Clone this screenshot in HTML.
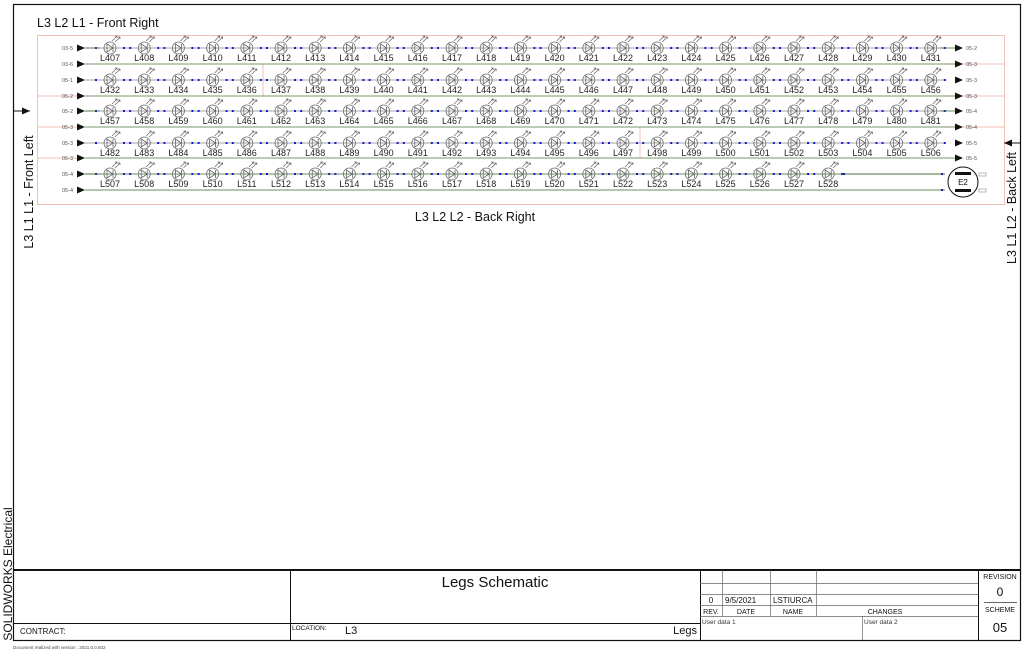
<!DOCTYPE html>
<html><head><meta charset="utf-8"><style>
body{margin:0;background:#fff;}
svg{display:block;font-family:"Liberation Sans",sans-serif;}
</style></head><body>
<svg width="1024" height="653" viewBox="0 0 1024 653" xmlns="http://www.w3.org/2000/svg">
<defs>
<g id="led">
<circle cx="0" cy="0" r="6" fill="none" stroke="#666" stroke-width="0.8"/>
<path d="M-3,-4 L3,0 L-3,4 Z M3,-4 V4" fill="none" stroke="#666" stroke-width="0.8"/>
<path d="M2,-7 L7,-12 M5,-12 H7 V-10 M5,-6 L10,-11 M8,-11 H10 V-9" fill="none" stroke="#666" stroke-width="0.7"/>
<rect x="-15" y="-1" width="2" height="2" fill="#1020d0"/>
<rect x="13" y="-1" width="2" height="2" fill="#1020d0"/>
</g>
<g id="row25">
<line x1="85" y1="0" x2="945" y2="0" stroke="#888" stroke-width="0.8"/>
<use href="#led" x="110"/><use href="#led" x="144.2"/><use href="#led" x="178.4"/><use href="#led" x="212.6"/><use href="#led" x="246.8"/><use href="#led" x="281"/><use href="#led" x="315.2"/><use href="#led" x="349.4"/><use href="#led" x="383.6"/><use href="#led" x="417.8"/><use href="#led" x="452"/><use href="#led" x="486.2"/><use href="#led" x="520.4"/><use href="#led" x="554.6"/><use href="#led" x="588.8"/><use href="#led" x="623"/><use href="#led" x="657.2"/><use href="#led" x="691.4"/><use href="#led" x="725.6"/><use href="#led" x="759.8"/><use href="#led" x="794"/><use href="#led" x="828.2"/><use href="#led" x="862.4"/><use href="#led" x="896.6"/><use href="#led" x="930.8"/>
</g>
<g id="row22">
<line x1="85" y1="0" x2="945" y2="0" stroke="#3a6a2a" stroke-width="0.8"/>
<use href="#led" x="110"/><use href="#led" x="144.2"/><use href="#led" x="178.4"/><use href="#led" x="212.6"/><use href="#led" x="246.8"/><use href="#led" x="281"/><use href="#led" x="315.2"/><use href="#led" x="349.4"/><use href="#led" x="383.6"/><use href="#led" x="417.8"/><use href="#led" x="452"/><use href="#led" x="486.2"/><use href="#led" x="520.4"/><use href="#led" x="554.6"/><use href="#led" x="588.8"/><use href="#led" x="623"/><use href="#led" x="657.2"/><use href="#led" x="691.4"/><use href="#led" x="725.6"/><use href="#led" x="759.8"/><use href="#led" x="794"/><use href="#led" x="828.2"/>
</g>
<path id="arr" d="M0,-3.5 L8,0 L0,3.5 Z" fill="#111"/>
</defs>

<rect x="13.5" y="4.5" width="1007" height="636" fill="none" stroke="#111" stroke-width="1.2"/>
<rect x="37.5" y="35.5" width="967" height="169" fill="none" stroke="#f4c0b4" stroke-width="1"/>

<text x="37" y="27" font-size="12.5" fill="#111">L3 L2 L1 - Front Right</text>
<text x="475" y="221" font-size="12.5" fill="#111" text-anchor="middle">L3 L2 L2 - Back Right</text>
<text transform="translate(33,192) rotate(-90)" font-size="12.5" fill="#111" text-anchor="middle">L3 L1 L1 - Front Left</text>
<text transform="translate(1016,208) rotate(-90)" font-size="12.5" fill="#111" text-anchor="middle">L3 L1 L2 - Back Left</text>
<text transform="translate(12,574) rotate(-90)" font-size="12" fill="#111" text-anchor="middle">SOLIDWORKS Electrical</text>

<path d="M37,96 H78 M37,127 H78 M37,158 H78 M263,64 V96 M640,127 V158" fill="none" stroke="#f4c0b4" stroke-width="1"/>
<path d="M945,64 H1004 M945,96 H1004 M945,127 H1004" fill="none" stroke="#f4c0b4" stroke-width="1"/>

<line x1="13" y1="111" x2="30" y2="111" stroke="#111" stroke-width="1"/>
<use href="#arr" x="22" y="111"/>
<line x1="1004" y1="143" x2="1021" y2="143" stroke="#111" stroke-width="1"/>
<path d="M1004,143 L1012,139.5 L1012,146.5 Z" fill="#111"/>

<use href="#row25" y="48"/><use href="#row25" y="80"/><use href="#row25" y="111"/><use href="#row25" y="143"/><use href="#row22" y="174"/>
<path d="M85,48 H100 M85,111 H100 M85,174 H100" stroke="#3a6a2a" stroke-width="0.8"/>
<path d="M940,48 H955 M940,111 H955" stroke="#3a6a2a" stroke-width="0.8"/>
<path d="M85,64 H955 M85,96 H955 M85,127 H955 M85,158 H955" stroke="#4a7a3a" stroke-width="0.8"/>
<path d="M842,174 H945 M85,190 H945" stroke="#3a6a2a" stroke-width="0.8"/>
<rect x="843" y="173" width="2" height="2" fill="#1020d0"/>
<rect x="941" y="173" width="2" height="2" fill="#1020d0"/>
<rect x="941" y="189" width="2" height="2" fill="#1020d0"/>

<g font-size="5.5" fill="#555">
<use href="#arr" x="77" y="48"/><text x="62" y="50">03-5</text>
<use href="#arr" x="77" y="64"/><text x="62" y="66">03-6</text>
<use href="#arr" x="77" y="80"/><text x="62" y="82">05-1</text>
<use href="#arr" x="77" y="96"/><text x="62" y="98">05-2</text>
<use href="#arr" x="77" y="111"/><text x="62" y="113">05-2</text>
<use href="#arr" x="77" y="127"/><text x="62" y="129">05-3</text>
<use href="#arr" x="77" y="143"/><text x="62" y="145">05-3</text>
<use href="#arr" x="77" y="158"/><text x="62" y="160">05-3</text>
<use href="#arr" x="77" y="174"/><text x="62" y="176">05-4</text>
<use href="#arr" x="77" y="190"/><text x="62" y="192">05-4</text>
<use href="#arr" x="955" y="48"/><text x="966" y="50">05-2</text>
<use href="#arr" x="955" y="64"/><text x="966" y="66">05-3</text>
<use href="#arr" x="955" y="80"/><text x="966" y="82">05-3</text>
<use href="#arr" x="955" y="96"/><text x="966" y="98">05-3</text>
<use href="#arr" x="955" y="111"/><text x="966" y="113">05-4</text>
<use href="#arr" x="955" y="127"/><text x="966" y="129">05-4</text>
<use href="#arr" x="955" y="143"/><text x="966" y="145">05-5</text>
<use href="#arr" x="955" y="158"/><text x="966" y="160">05-5</text>
</g>

<circle cx="963" cy="182" r="15" fill="#fff" stroke="#111" stroke-width="1"/>
<rect x="955" y="172" width="16" height="3" fill="#111"/>
<rect x="955" y="189" width="16" height="3" fill="#111"/>
<text x="963" y="185" font-size="8" text-anchor="middle" fill="#111">E2</text>
<rect x="979" y="173" width="7" height="3" fill="none" stroke="#777" stroke-width="0.5"/>
<rect x="979" y="189" width="7" height="3" fill="none" stroke="#777" stroke-width="0.5"/>

<g font-size="9" fill="#222" text-anchor="middle">
<g transform="translate(0,61)"><text x="110">L407</text><text x="144.2">L408</text><text x="178.4">L409</text><text x="212.6">L410</text><text x="246.8">L411</text><text x="281">L412</text><text x="315.2">L413</text><text x="349.4">L414</text><text x="383.6">L415</text><text x="417.8">L416</text><text x="452">L417</text><text x="486.2">L418</text><text x="520.4">L419</text><text x="554.6">L420</text><text x="588.8">L421</text><text x="623">L422</text><text x="657.2">L423</text><text x="691.4">L424</text><text x="725.6">L425</text><text x="759.8">L426</text><text x="794">L427</text><text x="828.2">L428</text><text x="862.4">L429</text><text x="896.6">L430</text><text x="930.8">L431</text></g>
<g transform="translate(0,93)"><text x="110">L432</text><text x="144.2">L433</text><text x="178.4">L434</text><text x="212.6">L435</text><text x="246.8">L436</text><text x="281">L437</text><text x="315.2">L438</text><text x="349.4">L439</text><text x="383.6">L440</text><text x="417.8">L441</text><text x="452">L442</text><text x="486.2">L443</text><text x="520.4">L444</text><text x="554.6">L445</text><text x="588.8">L446</text><text x="623">L447</text><text x="657.2">L448</text><text x="691.4">L449</text><text x="725.6">L450</text><text x="759.8">L451</text><text x="794">L452</text><text x="828.2">L453</text><text x="862.4">L454</text><text x="896.6">L455</text><text x="930.8">L456</text></g>
<g transform="translate(0,124)"><text x="110">L457</text><text x="144.2">L458</text><text x="178.4">L459</text><text x="212.6">L460</text><text x="246.8">L461</text><text x="281">L462</text><text x="315.2">L463</text><text x="349.4">L464</text><text x="383.6">L465</text><text x="417.8">L466</text><text x="452">L467</text><text x="486.2">L468</text><text x="520.4">L469</text><text x="554.6">L470</text><text x="588.8">L471</text><text x="623">L472</text><text x="657.2">L473</text><text x="691.4">L474</text><text x="725.6">L475</text><text x="759.8">L476</text><text x="794">L477</text><text x="828.2">L478</text><text x="862.4">L479</text><text x="896.6">L480</text><text x="930.8">L481</text></g>
<g transform="translate(0,156)"><text x="110">L482</text><text x="144.2">L483</text><text x="178.4">L484</text><text x="212.6">L485</text><text x="246.8">L486</text><text x="281">L487</text><text x="315.2">L488</text><text x="349.4">L489</text><text x="383.6">L490</text><text x="417.8">L491</text><text x="452">L492</text><text x="486.2">L493</text><text x="520.4">L494</text><text x="554.6">L495</text><text x="588.8">L496</text><text x="623">L497</text><text x="657.2">L498</text><text x="691.4">L499</text><text x="725.6">L500</text><text x="759.8">L501</text><text x="794">L502</text><text x="828.2">L503</text><text x="862.4">L504</text><text x="896.6">L505</text><text x="930.8">L506</text></g>
<g transform="translate(0,187)"><text x="110">L507</text><text x="144.2">L508</text><text x="178.4">L509</text><text x="212.6">L510</text><text x="246.8">L511</text><text x="281">L512</text><text x="315.2">L513</text><text x="349.4">L514</text><text x="383.6">L515</text><text x="417.8">L516</text><text x="452">L517</text><text x="486.2">L518</text><text x="520.4">L519</text><text x="554.6">L520</text><text x="588.8">L521</text><text x="623">L522</text><text x="657.2">L523</text><text x="691.4">L524</text><text x="725.6">L525</text><text x="759.8">L526</text><text x="794">L527</text><text x="828.2">L528</text></g>
</g>

<g stroke="#111" fill="none">
<line x1="13" y1="570" x2="1021" y2="570" stroke-width="2"/>
<line x1="290.5" y1="570" x2="290.5" y2="640" stroke-width="1"/>
<line x1="700.5" y1="570" x2="700.5" y2="640" stroke-width="1"/>
<line x1="978.5" y1="570" x2="978.5" y2="640" stroke-width="1"/>
<line x1="14" y1="623.5" x2="700" y2="623.5" stroke-width="1"/>
<g stroke="#666" stroke-width="0.7">
<line x1="722.5" y1="570" x2="722.5" y2="616"/>
<line x1="770.5" y1="570" x2="770.5" y2="616"/>
<line x1="816.5" y1="570" x2="816.5" y2="616"/>
<line x1="862.5" y1="616" x2="862.5" y2="640"/>
<line x1="700" y1="583.5" x2="978" y2="583.5"/>
<line x1="700" y1="594.5" x2="978" y2="594.5"/>
<line x1="700" y1="605.5" x2="978" y2="605.5"/>
<line x1="700" y1="616.5" x2="978" y2="616.5"/>
<line x1="984" y1="602.5" x2="1017" y2="602.5" stroke-width="1"/>
</g>
</g>
<g fill="#111">
<text x="495" y="587" font-size="15" text-anchor="middle">Legs Schematic</text>
<text x="20" y="634" font-size="8">CONTRACT:</text>
<text x="292" y="630" font-size="6.5">LOCATION:</text>
<text x="345" y="634" font-size="11">L3</text>
<text x="697" y="634" font-size="11" text-anchor="end">Legs</text>
<text x="711" y="603" font-size="8" text-anchor="middle">0</text>
<text x="725" y="603" font-size="8">9/5/2021</text>
<text x="773" y="603" font-size="8">LSTIURCA</text>
<text x="711" y="614" font-size="7" text-anchor="middle">REV.</text>
<text x="746" y="614" font-size="7" text-anchor="middle">DATE</text>
<text x="793" y="614" font-size="7" text-anchor="middle">NAME</text>
<text x="885" y="614" font-size="7" text-anchor="middle">CHANGES</text>
<text x="702" y="624" font-size="6.5" fill="#333">User data 1</text>
<text x="864" y="624" font-size="6.5" fill="#333">User data 2</text>
<text x="1000" y="579" font-size="7" text-anchor="middle">REVISION</text>
<text x="1000" y="596" font-size="12" text-anchor="middle">0</text>
<text x="1000" y="612" font-size="7" text-anchor="middle">SCHEME</text>
<text x="1000" y="632" font-size="13" text-anchor="middle">05</text>
<text x="13" y="649" font-size="4.5" fill="#444">Document realized with version : 2021.0.0.502</text>
</g>
</svg>
</body></html>
